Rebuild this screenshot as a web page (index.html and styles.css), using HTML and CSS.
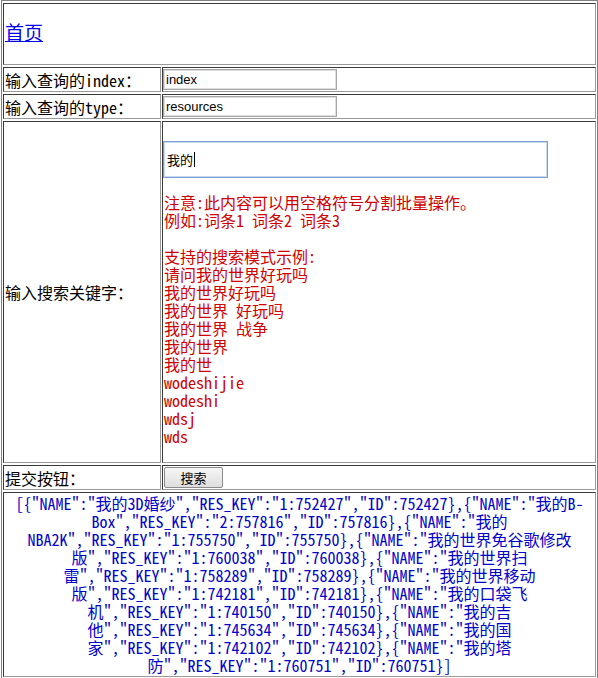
FILE: index.html
```
<!DOCTYPE html>
<html lang="zh-CN">
<head>
<meta charset="utf-8">
<title>首页</title>
<link rel="stylesheet" href="styles.css">
</head>
<body>
<table class="form-table">
  <tr>
    <td colspan="2" class="cell"><div class="home"><a href="#" class="home-link">首页</a></div></td>
  </tr>
  <tr>
    <td class="cell label">输入查询的index<span class="fw">：</span></td>
    <td class="cell"><input class="small-input" type="text" value="index"></td>
  </tr>
  <tr>
    <td class="cell label">输入查询的type<span class="fw">：</span></td>
    <td class="cell"><input class="small-input" type="text" value="resources"></td>
  </tr>
  <tr>
    <td class="cell label">输入搜索关键字<span class="fw">：</span></td>
    <td class="cell">
      <div class="kw-input">我的<span class="caret"></span></div>
      <div class="hint">注意:此内容可以用空格符号分割批量操作<span class="fw">。</span><br>例如:词条1 词条2 词条3<br><br>支持的搜索模式示例:<br>请问我的世界好玩吗<br>我的世界好玩吗<br>我的世界 好玩吗<br>我的世界 战争<br>我的世界<br>我的世<br>wodeshijie<br>wodeshi<br>wdsj<br>wds</div>
    </td>
  </tr>
  <tr>
    <td class="cell label">提交按钮<span class="fw">：</span></td>
    <td class="cell"><button class="btn" type="button">搜索</button></td>
  </tr>
  <tr>
    <td colspan="2" class="cell result">[{"NAME":"我的3D婚纱","RES_KEY":"1:752427","ID":752427},{"NAME":"我的B-<br>Box","RES_KEY":"2:757816","ID":757816},{"NAME":"我的<br>NBA2K","RES_KEY":"1:755750","ID":755750},{"NAME":"我的世界免谷歌修改<br>版","RES_KEY":"1:760038","ID":760038},{"NAME":"我的世界扫<br>雷","RES_KEY":"1:758289","ID":758289},{"NAME":"我的世界移动<br>版","RES_KEY":"1:742181","ID":742181},{"NAME":"我的口袋飞<br>机","RES_KEY":"1:740150","ID":740150},{"NAME":"我的吉<br>他","RES_KEY":"1:745634","ID":745634},{"NAME":"我的国<br>家","RES_KEY":"1:742102","ID":742102},{"NAME":"我的塔<br>防","RES_KEY":"1:760751","ID":760751}]</td>
  </tr>
</table>
</body>
</html>
```

FILE: styles.css
```
html, body {
  margin: 0;
  padding: 0;
  background: #ffffff;
}

body {
  padding-left: 1px;
  font-family: "Noto Sans CJK SC", "Noto Sans", sans-serif;
  font-feature-settings: "hwid" 1;
  font-size: 16px;
  line-height: 18px;
  color: #000000;
}

.fw {
  font-feature-settings: normal;
}

.form-table {
  width: 597px;
  border: 1px solid #808080;
  border-spacing: 1px 2px;
  border-collapse: separate;
}

.cell {
  padding: 1px;
  border-top: 1px solid #3a3a3a;
  border-left: 1px solid #3a3a3a;
  border-right: 1px solid #9a9a9a;
  border-bottom: 1px solid #9a9a9a;
  vertical-align: middle;
  text-align: left;
}

.label {
  width: 154px;
  white-space: nowrap;
}

.home {
  height: 58px;
  display: flex;
  align-items: center;
}

.home-link {
  font-size: 19px;
  line-height: 22px;
  color: #0000ee;
  text-decoration: underline;
  margin-top: -5px;
}

.small-input {
  display: block;
  box-sizing: border-box;
  width: 174px;
  height: 21px;
  margin: 0 0 0 -1px;
  padding: 0 2px;
  border: 1px solid #a6a6a6;
  box-shadow: inset 0 0 0 1px #dedede;
  font-family: "Liberation Sans", Arial, sans-serif;
  font-feature-settings: normal;
  font-size: 13px;
  color: #000;
  background: #fff;
  outline: none;
}

.kw-input {
  box-sizing: border-box;
  width: 385px;
  height: 37px;
  margin: 18px 0 0 -1px;
  padding: 0 3px;
  border: 1px solid #7a9fd6;
  box-shadow: inset 0 0 0 1px #c9d9f1;
  display: flex;
  align-items: center;
  font-size: 13px;
  line-height: 16px;
  background: #fff;
}

.caret {
  display: inline-block;
  width: 1px;
  height: 15px;
  margin-left: 1px;
  background: #000;
}

.hint {
  margin: 15px 0 16px 0;
  color: #d00000;
  white-space: nowrap;
}

.btn {
  display: block;
  box-sizing: border-box;
  width: 59px;
  height: 21px;
  margin: 0;
  padding: 0;
  border: 1px solid #8c8c8c;
  border-radius: 2px;
  background: linear-gradient(#f6f6f6, #dedede);
  font-family: "Noto Sans CJK SC", sans-serif;
  font-size: 13px;
  line-height: 18px;
  color: #000;
}

.result {
  padding: 1px 1px 2px 1px;
  text-align: center;
  white-space: nowrap;
  color: #0000cc;
}
```
